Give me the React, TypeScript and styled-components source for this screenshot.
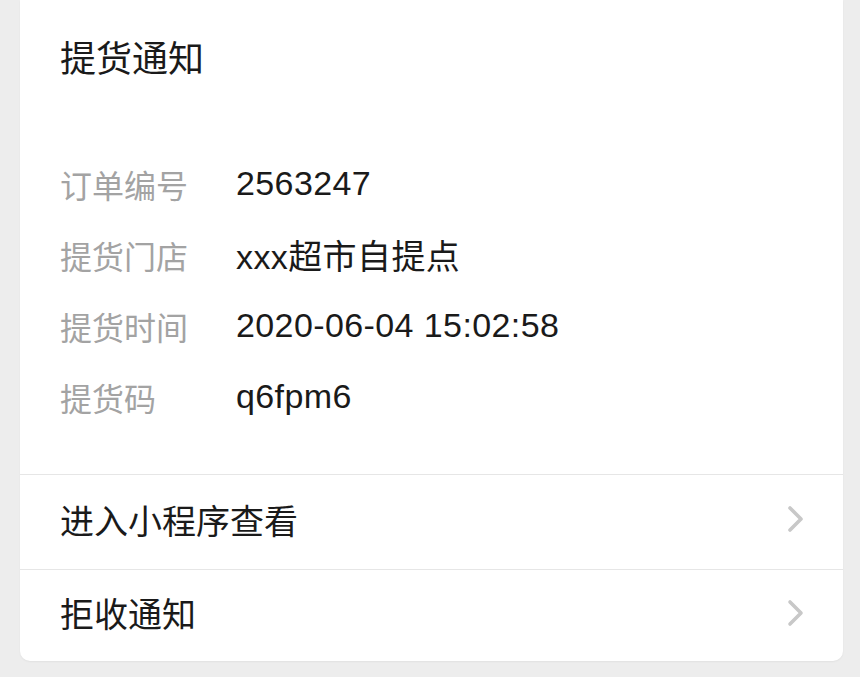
import styled, { createGlobalStyle } from "styled-components"

const GlobalStyle = createGlobalStyle`
  html, body {
    margin: 0;
    padding: 0;
    background: #ededed;
  }
  body {
    font-family: "Liberation Sans", "Noto Sans CJK SC", sans-serif;
    -webkit-font-smoothing: antialiased;
  }
  * {
    box-sizing: border-box;
  }
`

const Page = styled.div`
  width: 860px;
  height: 677px;
  overflow: hidden;
  background: #ededed;
`

const Card = styled.div`
  margin-left: 20px;
  width: 823px;
  background: #ffffff;
  border-radius: 0 0 10px 10px;
  box-shadow: 0 1px 2px rgba(0, 0, 0, 0.05);
`

const Body = styled.div`
  padding: 36px 40px 42px;
`

const Title = styled.div`
  font-size: 36px;
  line-height: 48px;
  color: #1a1a1a;
  margin-bottom: 64px;
`

const InfoList = styled.div`
  display: flex;
  flex-direction: column;
`

const InfoRow = styled.div`
  display: flex;
  align-items: center;
  height: 71px;
  font-size: 32px;
`

const Label = styled.span`
  width: 176px;
  flex-shrink: 0;
  color: #a3a3a3;
`

const Value = styled.span`
  color: #1a1a1a;
  font-size: 34px;
  letter-spacing: 0.4px;
`

const MenuRow = styled.div<{ $height: number }>`
  display: flex;
  align-items: center;
  justify-content: space-between;
  height: ${({ $height }) => $height}px;
  padding: 0 38px 6px 40px;
  border-top: 1px solid #e6e6e6;
  font-size: 34px;
  color: #1a1a1a;
`

const Chevron = () => (
  <svg width="18" height="28" viewBox="0 0 18 28">
    <path d="M3 3 L14 14 L3 25" fill="none" stroke="#c8c8c8" strokeWidth="3.6" strokeLinecap="round" strokeLinejoin="round" />
  </svg>
)

const info = [
  { label: "订单编号", value: "2563247" },
  { label: "提货门店", value: "xxx超市自提点" },
  { label: "提货时间", value: "2020-06-04 15:02:58" },
  { label: "提货码", value: "q6fpm6" },
]

export default function App() {
  return (
    <Page>
      <GlobalStyle />
      <Card>
        <Body>
          <Title>提货通知</Title>
          <InfoList>
            {info.map((item) => (
              <InfoRow key={item.label}>
                <Label>{item.label}</Label>
                <Value>{item.value}</Value>
              </InfoRow>
            ))}
          </InfoList>
        </Body>
        <MenuRow $height={95}>
          <span>进入小程序查看</span>
          <Chevron />
        </MenuRow>
        <MenuRow $height={92}>
          <span>拒收通知</span>
          <Chevron />
        </MenuRow>
      </Card>
    </Page>
  )
}
